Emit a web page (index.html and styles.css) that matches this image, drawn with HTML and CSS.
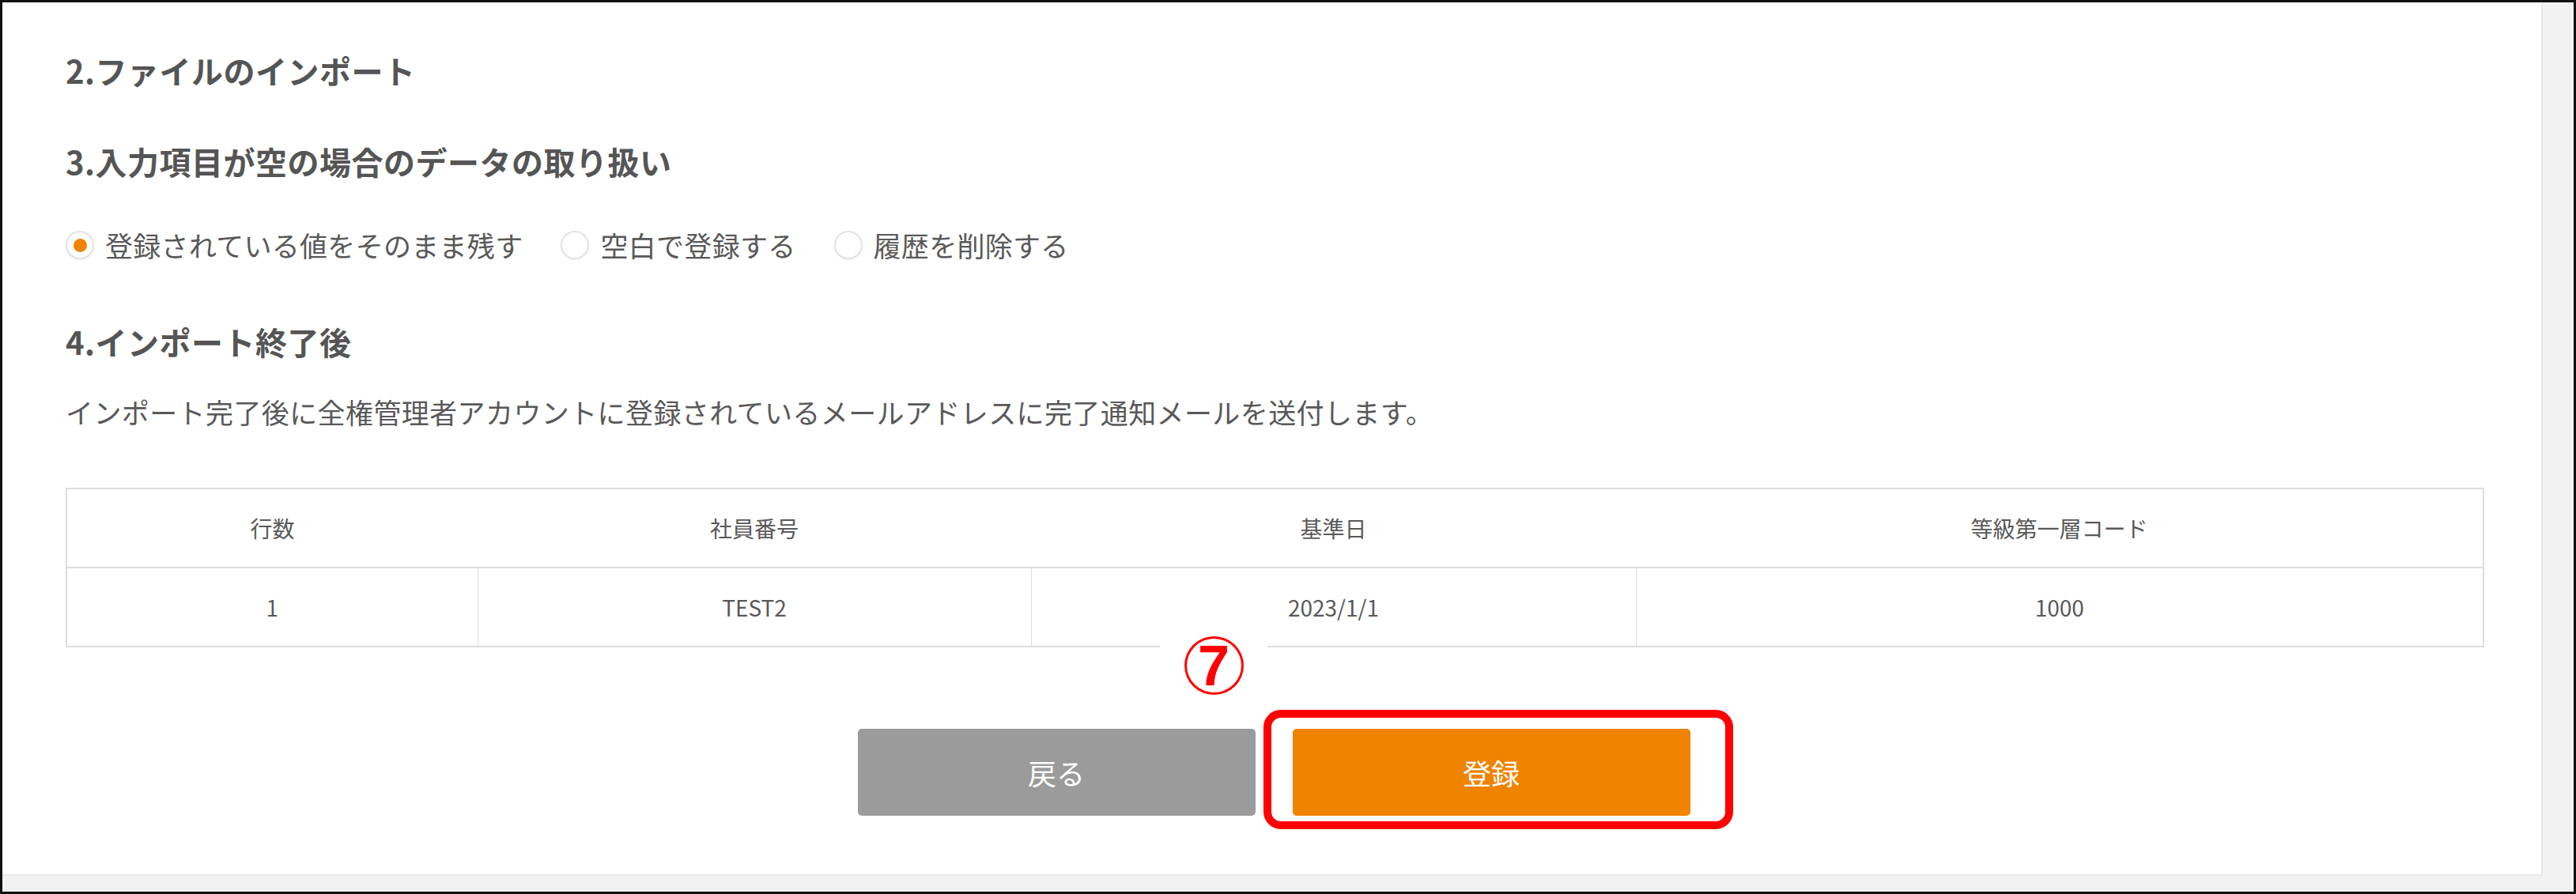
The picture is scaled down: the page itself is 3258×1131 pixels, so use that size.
FILE: index.html
```html
<!DOCTYPE html>
<html lang="ja">
<head>
<meta charset="utf-8">
<title>インポート</title>
<link rel="stylesheet" href="styles.css">
</head>
<body>
<div class="frame">
  <div class="panel">
    <h2 class="heading h-first">2.ファイルのインポート</h2>
    <h2 class="heading h-second">3.入力項目が空の場合のデータの取り扱い</h2>
    <div class="radios">
      <label class="radio"><span class="dot checked"></span><span class="rlabel">登録されている値をそのまま残す</span></label>
      <label class="radio"><span class="dot"></span><span class="rlabel">空白で登録する</span></label>
      <label class="radio"><span class="dot"></span><span class="rlabel">履歴を削除する</span></label>
    </div>
    <h2 class="heading h-third">4.インポート終了後</h2>
    <p class="desc">インポート完了後に全権管理者アカウントに登録されているメールアドレスに完了通知メールを送付します。</p>
    <table class="data">
      <colgroup>
        <col class="c1"><col class="c2"><col class="c3"><col class="c4">
      </colgroup>
      <thead>
        <tr><th>行数</th><th>社員番号</th><th>基準日</th><th>等級第一層コード</th></tr>
      </thead>
      <tbody>
        <tr><td>1</td><td>TEST2</td><td>2023/1/1</td><td>1000</td></tr>
      </tbody>
    </table>
    <div class="actions">
      <button class="btn btn-back">戻る</button>
      <button class="btn btn-submit">登録</button>
    </div>
    <div class="marker"><span class="num">7</span></div>
    <div class="highlight"></div>
  </div>
</div>
</body>
</html>
```

FILE: styles.css
```css
* { box-sizing: border-box; }
html, body { margin: 0; padding: 0; background: #fff; }
body {
  font-family: "Noto Sans CJK JP", "Noto Sans", sans-serif;
  color: #555;
}
.frame {
  width: 3258px;
  height: 1131px;
  border: 3px solid #111;
  background: #f2f2f2;
  display: flex;
  flex-direction: column;
  align-items: flex-start;
}
.panel {
  position: relative;
  width: 3213px;
  height: 1105px;
  background: #fff;
  border-right: 2px solid #e9e9e9;
  border-bottom: 2px solid #e9e9e9;
  padding: 56px 75px 0 80px;
}
.heading {
  margin: 0;
  font-size: 40px;
  line-height: 60px;
  font-weight: 700;
  letter-spacing: 0.5px;
  color: #555;
}
.h-second { margin-top: 55px; }
.h-third { margin-top: 67px; }
.radios {
  margin-top: 51px;
  display: flex;
  align-items: center;
  height: 50px;
  gap: 48px;
}
.radio {
  display: flex;
  align-items: center;
  gap: 14px;
}
.dot {
  width: 36px;
  height: 36px;
  border-radius: 50%;
  border: 2px solid #e3e3e3;
  box-shadow: 0 1px 2px rgba(0,0,0,0.06);
  display: flex;
  align-items: center;
  justify-content: center;
  background: #fff;
}
.dot.checked::after {
  content: "";
  width: 17px;
  height: 17px;
  border-radius: 50%;
  background: #f08300;
}
.rlabel {
  font-size: 35px;
  line-height: 50px;
  letter-spacing: 0.3px;
  color: #595959;
}
.desc {
  margin: 34px 0 0;
  font-size: 35px;
  line-height: 50px;
  letter-spacing: 0.4px;
  color: #595959;
}
.data {
  margin-top: 71px;
  width: 3057px;
  border-collapse: collapse;
  table-layout: fixed;
  border: 2px solid #dddddd;
  color: #595959;
}
.c1 { width: 520px; }
.c2 { width: 700px; }
.c3 { width: 765px; }
.c4 { width: 1072px; }
.data th, .data td {
  height: 100px;
  padding: 0;
  text-align: center;
  font-size: 28px;
  font-weight: 400;
}
.data th { border-bottom: 2px solid #dddddd; }
.data td { border-left: 1px solid #dddddd; }
.data td:first-child { border-left: none; }
.actions {
  margin-top: 103px;
  display: flex;
  justify-content: center;
  gap: 47px;
}
.btn {
  width: 503px;
  height: 110px;
  border: none;
  border-radius: 5px;
  color: #fff;
  font-family: "Noto Sans CJK JP", sans-serif;
  font-size: 36px;
}
.btn-back { background: #9b9b9b; }
.btn-submit { background: #f08300; }
.marker {
  position: absolute;
  left: 1464px;
  top: 800px;
  width: 136px;
  height: 80px;
  background: #fff;
  display: flex;
  justify-content: center;
  align-items: flex-start;
}
.num {
  width: 75px;
  height: 74px;
  margin-top: 2px;
  border: 3px solid #ff0000;
  border-radius: 50%;
  color: #ff0000;
  font-family: "Liberation Sans", sans-serif;
  font-weight: 700;
  font-size: 72px;
  line-height: 68px;
  text-align: center;
}
.highlight {
  position: absolute;
  left: 1595px;
  top: 895px;
  width: 594px;
  height: 151px;
  border: 10px solid #ff0000;
  border-radius: 22px;
}
```
